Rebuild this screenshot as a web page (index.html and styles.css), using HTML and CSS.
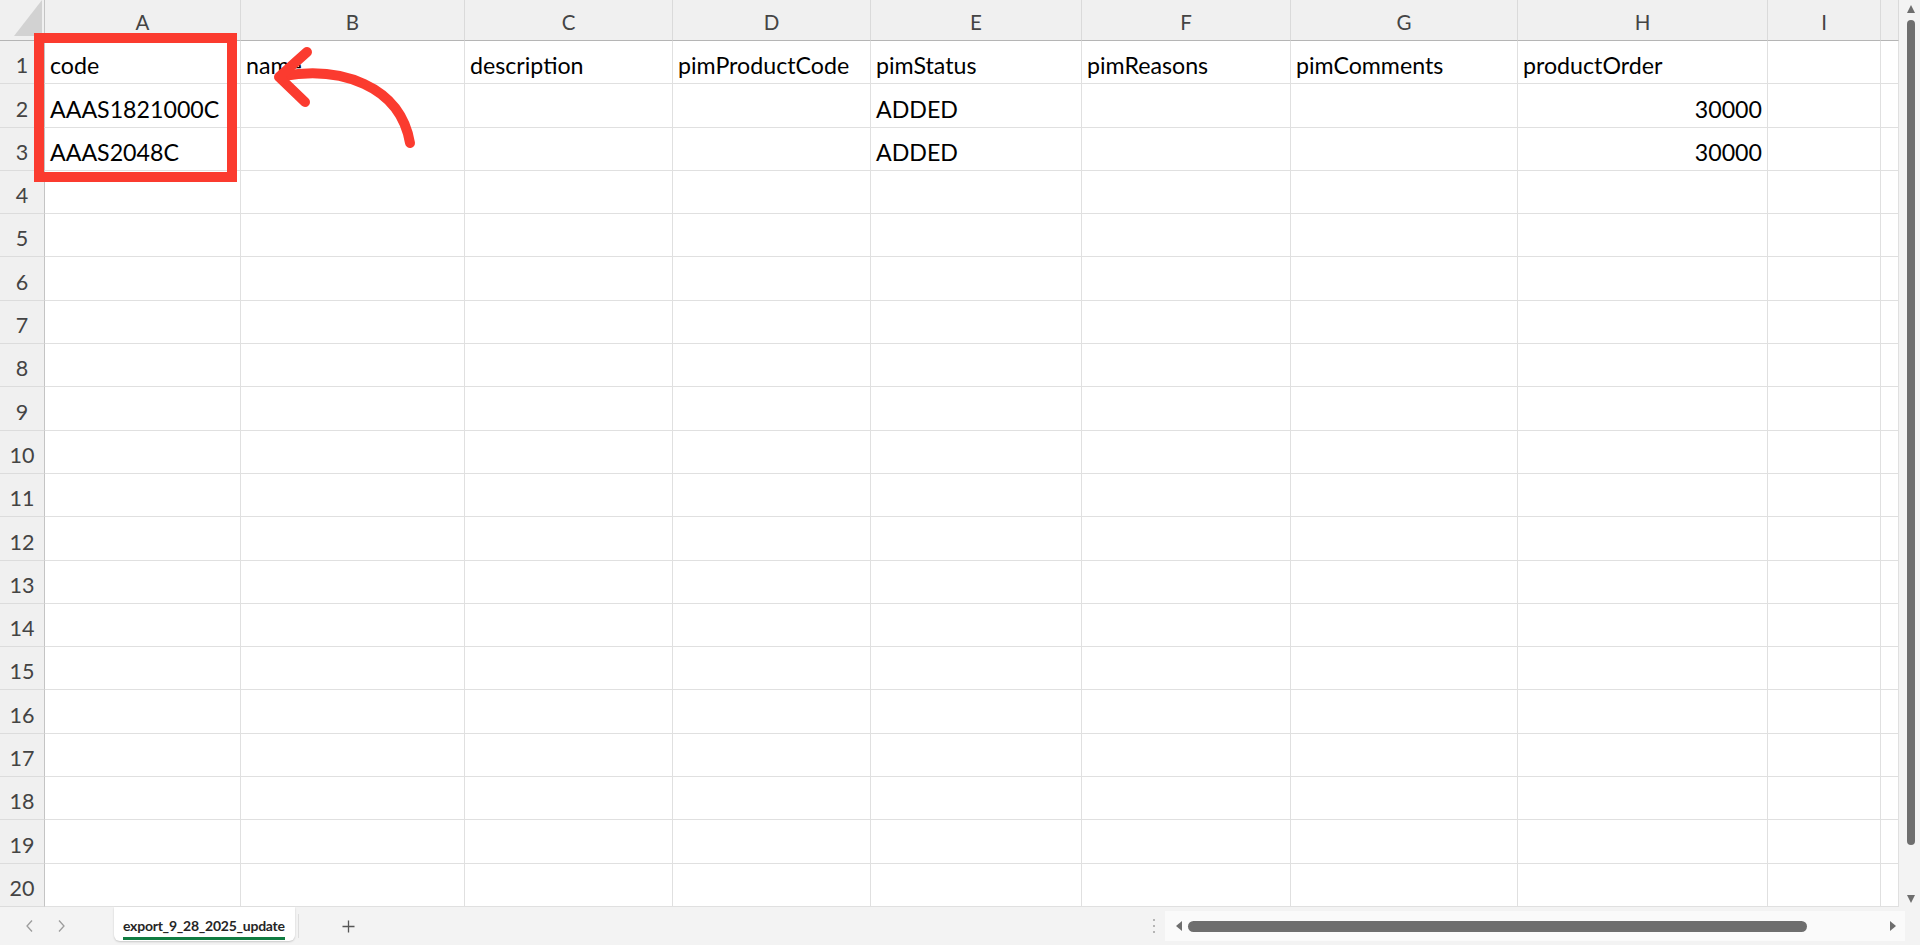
FILE: index.html
```html
<!DOCTYPE html>
<html lang="en">
<head>
<meta charset="utf-8">
<title>export_9_28_2025_update</title>
<link rel="stylesheet" href="styles.css">
</head>
<body>
<div class="app">
  <div class="main">
    <div class="sheet">
      <div class="row hdr">
        <div class="corner"><svg class="tri" width="44" height="40" viewBox="0 0 44 40"><polygon points="42,0 42,36 14,36" fill="#d2d2d2"/></svg></div>
        <div class="ch">A</div><div class="ch">B</div><div class="ch">C</div><div class="ch">D</div><div class="ch">E</div><div class="ch">F</div><div class="ch">G</div><div class="ch">H</div><div class="ch">I</div><div class="ch"></div>
      </div>
      <div class="row">
        <div class="rh">1</div><div class="c">code</div><div class="c">name</div><div class="c">description</div><div class="c">pimProductCode</div><div class="c">pimStatus</div><div class="c">pimReasons</div><div class="c">pimComments</div><div class="c">productOrder</div><div class="c"></div><div class="c"></div>
      </div>
      <div class="row">
        <div class="rh">2</div><div class="c">AAAS1821000C</div><div class="c"></div><div class="c"></div><div class="c"></div><div class="c">ADDED</div><div class="c"></div><div class="c"></div><div class="c num">30000</div><div class="c"></div><div class="c"></div>
      </div>
      <div class="row">
        <div class="rh">3</div><div class="c">AAAS2048C</div><div class="c"></div><div class="c"></div><div class="c"></div><div class="c">ADDED</div><div class="c"></div><div class="c"></div><div class="c num">30000</div><div class="c"></div><div class="c"></div>
      </div>
      <div class="row"><div class="rh">4</div><div class="c"></div><div class="c"></div><div class="c"></div><div class="c"></div><div class="c"></div><div class="c"></div><div class="c"></div><div class="c"></div><div class="c"></div><div class="c"></div></div>
      <div class="row"><div class="rh">5</div><div class="c"></div><div class="c"></div><div class="c"></div><div class="c"></div><div class="c"></div><div class="c"></div><div class="c"></div><div class="c"></div><div class="c"></div><div class="c"></div></div>
      <div class="row"><div class="rh">6</div><div class="c"></div><div class="c"></div><div class="c"></div><div class="c"></div><div class="c"></div><div class="c"></div><div class="c"></div><div class="c"></div><div class="c"></div><div class="c"></div></div>
      <div class="row"><div class="rh">7</div><div class="c"></div><div class="c"></div><div class="c"></div><div class="c"></div><div class="c"></div><div class="c"></div><div class="c"></div><div class="c"></div><div class="c"></div><div class="c"></div></div>
      <div class="row"><div class="rh">8</div><div class="c"></div><div class="c"></div><div class="c"></div><div class="c"></div><div class="c"></div><div class="c"></div><div class="c"></div><div class="c"></div><div class="c"></div><div class="c"></div></div>
      <div class="row"><div class="rh">9</div><div class="c"></div><div class="c"></div><div class="c"></div><div class="c"></div><div class="c"></div><div class="c"></div><div class="c"></div><div class="c"></div><div class="c"></div><div class="c"></div></div>
      <div class="row"><div class="rh">10</div><div class="c"></div><div class="c"></div><div class="c"></div><div class="c"></div><div class="c"></div><div class="c"></div><div class="c"></div><div class="c"></div><div class="c"></div><div class="c"></div></div>
      <div class="row"><div class="rh">11</div><div class="c"></div><div class="c"></div><div class="c"></div><div class="c"></div><div class="c"></div><div class="c"></div><div class="c"></div><div class="c"></div><div class="c"></div><div class="c"></div></div>
      <div class="row"><div class="rh">12</div><div class="c"></div><div class="c"></div><div class="c"></div><div class="c"></div><div class="c"></div><div class="c"></div><div class="c"></div><div class="c"></div><div class="c"></div><div class="c"></div></div>
      <div class="row"><div class="rh">13</div><div class="c"></div><div class="c"></div><div class="c"></div><div class="c"></div><div class="c"></div><div class="c"></div><div class="c"></div><div class="c"></div><div class="c"></div><div class="c"></div></div>
      <div class="row"><div class="rh">14</div><div class="c"></div><div class="c"></div><div class="c"></div><div class="c"></div><div class="c"></div><div class="c"></div><div class="c"></div><div class="c"></div><div class="c"></div><div class="c"></div></div>
      <div class="row"><div class="rh">15</div><div class="c"></div><div class="c"></div><div class="c"></div><div class="c"></div><div class="c"></div><div class="c"></div><div class="c"></div><div class="c"></div><div class="c"></div><div class="c"></div></div>
      <div class="row"><div class="rh">16</div><div class="c"></div><div class="c"></div><div class="c"></div><div class="c"></div><div class="c"></div><div class="c"></div><div class="c"></div><div class="c"></div><div class="c"></div><div class="c"></div></div>
      <div class="row"><div class="rh">17</div><div class="c"></div><div class="c"></div><div class="c"></div><div class="c"></div><div class="c"></div><div class="c"></div><div class="c"></div><div class="c"></div><div class="c"></div><div class="c"></div></div>
      <div class="row"><div class="rh">18</div><div class="c"></div><div class="c"></div><div class="c"></div><div class="c"></div><div class="c"></div><div class="c"></div><div class="c"></div><div class="c"></div><div class="c"></div><div class="c"></div></div>
      <div class="row"><div class="rh">19</div><div class="c"></div><div class="c"></div><div class="c"></div><div class="c"></div><div class="c"></div><div class="c"></div><div class="c"></div><div class="c"></div><div class="c"></div><div class="c"></div></div>
      <div class="row"><div class="rh">20</div><div class="c"></div><div class="c"></div><div class="c"></div><div class="c"></div><div class="c"></div><div class="c"></div><div class="c"></div><div class="c"></div><div class="c"></div><div class="c"></div></div>
    </div>
    <div class="vscroll">
      <svg class="varrow up" width="8" height="8" viewBox="0 0 8 8"><polygon points="4,0 8,8 0,8" fill="#6e6e6e"/></svg>
      <div class="vthumb"></div>
      <svg class="varrow down" width="8" height="8" viewBox="0 0 8 8"><polygon points="0,0 8,0 4,8" fill="#6e6e6e"/></svg>
    </div>
  </div>
  <div class="tabs">
    <div class="nav">
      <svg width="7" height="12" viewBox="0 0 7 12"><polyline points="6,0.5 1,6 6,11.5" fill="none" stroke="#9c9c9c" stroke-width="1.3"/></svg>
      <svg width="7" height="12" viewBox="0 0 7 12"><polyline points="1,0.5 6,6 1,11.5" fill="none" stroke="#9c9c9c" stroke-width="1.3"/></svg>
    </div>
    <div class="tab"><span class="tabname">export_9_28_2025_update</span></div>
    <div class="sep"></div>
    <svg class="plus" width="13" height="13" viewBox="0 0 13 13"><path d="M6.5 0.5V12.5M0.5 6.5H12.5" stroke="#555" stroke-width="1.3"/></svg>
    <div class="spacer"></div>
    <div class="dots"><span></span><span></span><span></span></div>
    <div class="htrack">
      <svg class="harrow" width="6" height="10" viewBox="0 0 6 10"><polygon points="6,0 6,10 0,5" fill="#6e6e6e"/></svg>
      <div class="hthumb"></div>
      <svg class="harrow right" width="6" height="10" viewBox="0 0 6 10"><polygon points="0,0 6,5 0,10" fill="#6e6e6e"/></svg>
    </div>
  </div>
</div>
<svg class="overlay" width="1920" height="945" viewBox="0 0 1920 945">
  <rect x="39" y="38" width="193" height="139" fill="none" stroke="#fb3b2f" stroke-width="10"/>
  <path d="M410 143 C400 85, 340 66, 283 76" fill="none" stroke="#fb3b2f" stroke-width="10" stroke-linecap="round"/>
  <polyline points="307,52 279,77 305,102" fill="none" stroke="#fb3b2f" stroke-width="10" stroke-linecap="round" stroke-linejoin="round"/>
</svg>
</body>
</html>
```
FILE: styles.css
```css
* { box-sizing: border-box; margin: 0; padding: 0; }
html, body { width: 1920px; height: 945px; overflow: hidden; background: #fff; }
body { font-family: Lato, "Liberation Sans", sans-serif; color: #000; position: relative; }

.app { display: flex; flex-direction: column; height: 945px; }
.main { display: flex; height: 907px; }

.sheet { width: 1899px; display: flex; flex-direction: column; }
.row {
  display: grid;
  grid-template-columns: 45px 196px 224px 208px 198px 211px 209px 227px 250px 113px 18px;
  height: 43.3px;
}
.row.hdr { height: 41px; background: #f0f0f0; }

.corner { border-right: 1px solid #c4c4c4; border-bottom: 1px solid #b5b5b5; position: relative; }
.tri { display: block; }
.ch {
  border-right: 1px solid #dadada;
  border-bottom: 1px solid #b5b5b5;
  display: flex; align-items: center; justify-content: center;
  font-size: 20.5px; color: #444; padding-top: 3px;
}

.rh {
  background: #f0f0f0;
  border-right: 1px solid #c4c4c4;
  border-bottom: 1px solid #dcdcdc;
  color: #444;
  font-size: 21.5px; line-height: 26px;
  display: flex; align-items: flex-end; justify-content: center;
  padding-bottom: 5px;
}

.c {
  border-right: 1px solid #e0e0e0;
  border-bottom: 1px solid #e0e0e0;
  font-size: 23.2px; line-height: 26px;
  padding: 0 5px 5px;
  display: flex; align-items: flex-end;
  white-space: nowrap;
}
.c.num { justify-content: flex-end; }

.vscroll {
  width: 21px; background: #f3f3f3;
  display: flex; flex-direction: column; align-items: flex-start;
  padding-left: 8px;
}
.varrow { display: block; }
.varrow.up { margin-top: 5px; }
.vthumb { width: 8px; height: 825px; margin-top: 7px; border-radius: 4px; background: #6e6e6e; }
.varrow.down { margin-top: auto; margin-bottom: 4px; }

.tabs {
  height: 38px; background: #f3f3f3;
  display: flex; align-items: center;
}
.nav { display: flex; gap: 25px; padding-left: 26px; }
.nav svg { display: block; }
.tab {
  align-self: flex-start;
  margin-left: 49px;
  width: 181px; height: 34px;
  background: #fff;
  border-radius: 0 0 6px 6px;
  box-shadow: 0 1px 2px rgba(0,0,0,0.18);
  padding: 8px 0 0 9px;
}
.tabname {
  display: inline-block;
  font-size: 14px; font-weight: 700; color: #262626;
  letter-spacing: -0.25px;
  line-height: 19px;
  border-bottom: 3px solid #107c41;
  padding-bottom: 2px;
}
.sep { width: 1px; height: 24px; background: #dedede; margin-left: 3px; }
.plus { display: block; margin-left: 43px; }
.spacer { flex: 1; }
.dots { display: flex; flex-direction: column; gap: 4px; margin-right: 10px; }
.dots span { width: 2px; height: 2px; background: #b5b5b5; display: block; }
.htrack {
  width: 740px; height: 30px; margin-right: 15px;
  background: #fafafa;
  display: flex; align-items: center;
  padding: 0 9px 0 11px;
}
.harrow { display: block; }
.hthumb { width: 619px; height: 11px; border-radius: 6px; background: #6e6e6e; margin-left: 6px; }
.harrow.right { margin-left: auto; }

.overlay { position: absolute; left: 0; top: 0; pointer-events: none; }
```
